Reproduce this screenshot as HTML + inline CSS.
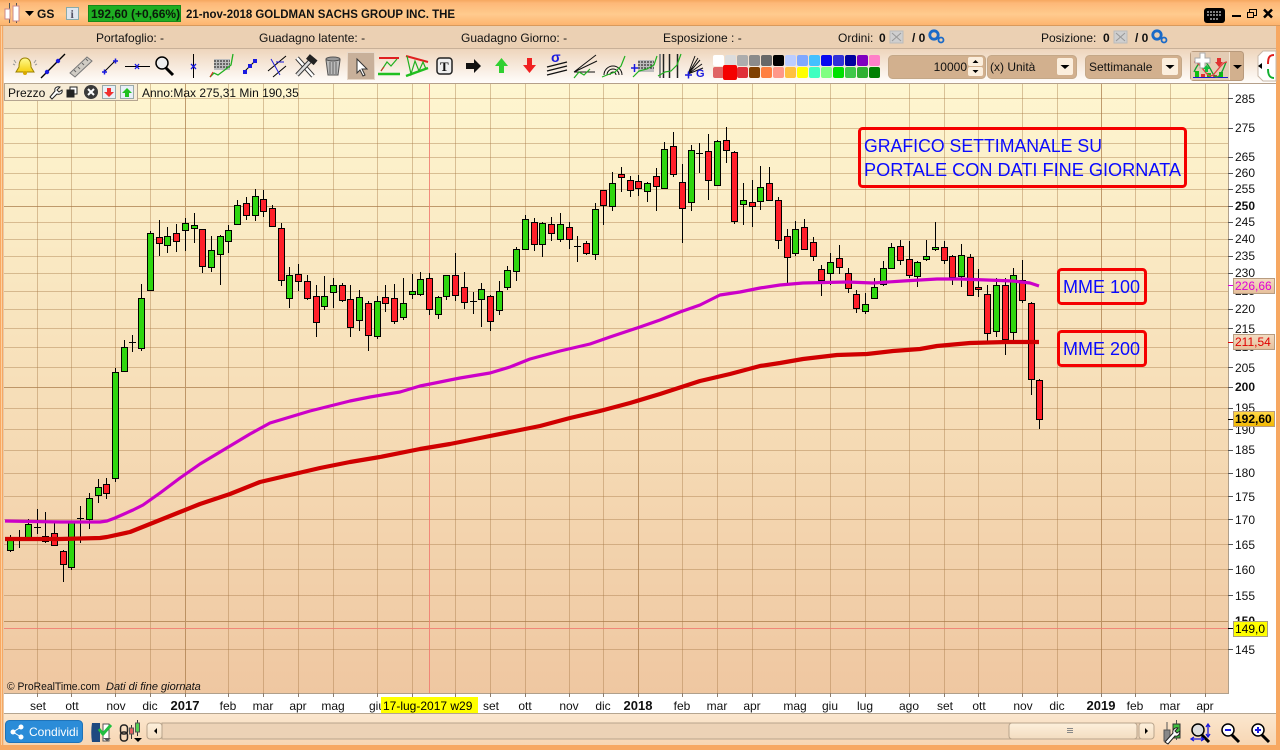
<!DOCTYPE html>
<html><head><meta charset="utf-8"><title>GS</title>
<style>
html,body{margin:0;padding:0;background:#fff;width:1280px;height:750px;overflow:hidden}
svg{display:block}
text{font-family:"Liberation Sans",Arial,sans-serif;font-size:12px;fill:#111}
.b{font-weight:bold}
.ax text{font-size:12px}
.ann{font-size:18px;fill:#0a0aff}
</style></head><body>
<svg width="1280" height="750" viewBox="0 0 1280 750" xmlns="http://www.w3.org/2000/svg">
<defs>
<linearGradient id="chart" x1="0" y1="0" x2="0" y2="1"><stop offset="0" stop-color="#fef6d0"/><stop offset="1" stop-color="#efc7a1"/></linearGradient>
<linearGradient id="title" x1="0" y1="0" x2="0" y2="1"><stop offset="0" stop-color="#f6a75f"/><stop offset=".12" stop-color="#fdb878"/><stop offset=".55" stop-color="#ffcb8e"/><stop offset="1" stop-color="#fdb26c"/></linearGradient>
<linearGradient id="tool" x1="0" y1="0" x2="0" y2="1"><stop offset="0" stop-color="#eed5bc"/><stop offset="1" stop-color="#fffdfb"/></linearGradient>
<linearGradient id="bot" x1="0" y1="0" x2="0" y2="1"><stop offset="0" stop-color="#fbe7cf"/><stop offset="1" stop-color="#f7d6b3"/></linearGradient>
<linearGradient id="btn" x1="0" y1="0" x2="0" y2="1"><stop offset="0" stop-color="#fdf0dc"/><stop offset="1" stop-color="#f3dcc0"/></linearGradient>
<linearGradient id="tag" x1="0" y1="0" x2="0" y2="1"><stop offset="0" stop-color="#f3dcc2"/><stop offset="1" stop-color="#e6bf9a"/></linearGradient>
<linearGradient id="gold" x1="0" y1="0" x2="0" y2="1"><stop offset="0" stop-color="#ffd84a"/><stop offset="1" stop-color="#f2b800"/></linearGradient>
<linearGradient id="bell" x1="0" y1="0" x2="0" y2="1"><stop offset="0" stop-color="#fffb90"/><stop offset="1" stop-color="#f5cf10"/></linearGradient>
</defs>

<!-- frame -->
<rect width="1280" height="750" fill="#fff"/>
<rect x="0" y="0" width="1280" height="26" fill="url(#title)"/>
<rect x="0" y="25" width="1280" height="1" fill="#d99a5c"/>
<rect x="0" y="26" width="1280" height="23" fill="#ebd0b3"/>
<rect x="0" y="48" width="1280" height="1" fill="#c8b098"/>
<rect x="0" y="49" width="1280" height="34" fill="url(#tool)"/>
<rect x="0" y="83" width="1280" height="1" fill="#b5a08a"/>

<!-- chart -->
<rect x="4" y="84" width="1224" height="609" fill="url(#chart)"/>
<g stroke="#a87a48" stroke-opacity=".42" fill="none">
<path d="M4 98.500H1228M4 113.500H1228M4 128.500H1228M4 143.500H1228M4 157.500H1228M4 173.500H1228M4 189.500H1228M4 222.500H1228M4 239.500H1228M4 256.500H1228M4 273.500H1228M4 291.500H1228M4 309.500H1228M4 328.500H1228M4 347.500H1228M4 367.500H1228M4 408.500H1228M4 429.500H1228M4 450.500H1228M4 473.500H1228M4 496.500H1228M4 519.500H1228M4 544.500H1228M4 569.500H1228M4 595.500H1228M4 649.500H1228"/>
<path d="M37.500 84V693M71.500 84V693M115.500 84V693M150.500 84V693M228.500 84V693M263.500 84V693M298.500 84V693M333.500 84V693M377.500 84V693M412.500 84V693M455.500 84V693M490.500 84V693M525.500 84V693M569.500 84V693M603.500 84V693M682.500 84V693M717.500 84V693M752.500 84V693M795.500 84V693M830.500 84V693M865.500 84V693M909.500 84V693M944.500 84V693M978.500 84V693M1022.500 84V693M1057.500 84V693M1135.500 84V693M1170.500 84V693M1205.500 84V693"/>
</g>
<g stroke="#a87a48" stroke-opacity=".72" fill="none">
<path d="M4 206.500H1228M4 387.500H1228M4 621.500H1228M185.500 84V693M638.500 84V693M1101.500 84V693"/>
</g>
<path d="M429.500 84V693M4 628.500H1228" stroke="#f07a70" fill="none" opacity=".85"/>

<!-- wicks -->
<path stroke="#000" stroke-width="1" fill="none" d="M10.500 535V552M19.500 530V548M28.500 519V539M37.500 509V534M45.500 512V543M54.500 523V546M63.500 550V582M71.500 521V570M80.500 506V543M89.500 493V529M98.500 479V503M106.500 478V499M115.500 368V482M124.500 340V371M132.500 335V352M141.500 284V351M150.500 231V290M159.500 220V256M167.500 227V253M176.500 224V252M185.500 218V251M194.500 213V243M202.500 229V273M211.500 236V272M220.500 235V285M228.500 225V253M237.500 200V224M246.500 197V220M255.500 189V221M263.500 190V217M272.500 205V226M281.500 223V286M289.500 267V308M298.500 264V291M307.500 275V300M316.500 285V337M324.500 276V310M333.500 278V308M342.500 283V302M350.500 285V337M359.500 290V331M368.500 301V351M377.500 296V339M385.500 285V312M394.500 284V324M403.500 278V320M412.500 274V299M420.500 272V296M429.500 273V315M438.500 296V319M446.500 275V300M455.500 253V301M464.500 272V309M473.500 292V314M481.500 283V327M490.500 295V331M499.500 281V315M507.500 266V290M516.500 247V281M525.500 215V249M534.500 218V251M542.500 222V257M551.500 217V241M560.500 213V242M569.500 222V249M577.500 236V262M586.500 241V255M595.500 203V260M603.500 190V225M612.500 172V211M621.500 167V192M630.500 176V197M638.500 175V196M647.500 182V202M656.500 168V211M664.500 142V189M673.500 132V177M682.500 164V243M691.500 145V211M699.500 143V173M708.500 134V200M717.500 140V186M726.500 127V163M734.500 151V224M743.500 183V225M752.500 180V227M760.500 166V210M769.500 167V201M778.500 197V249M787.500 229V283M795.500 221V256M804.500 219V250M813.500 237V261M821.500 265V296M830.500 253V285M839.500 245V274M848.500 268V293M856.500 290V313M865.500 293V314M874.500 278V299M883.500 261V286M891.500 243V268M900.500 240V265M909.500 241V278M917.500 261V287M926.500 240V261M935.500 222V251M944.500 241V264M952.500 255V285M961.500 244V287M970.500 254V296M978.500 269V297M987.500 285V342M996.500 278V337M1005.500 278V355M1013.500 268V341M1022.500 260V303M1031.500 302V395M1039.500 379V429"/>
<!-- dojis -->
<path stroke="#000" stroke-width="1" fill="none" d="M34 527.500h7M77 518.500h7M129 342.500h7M470 301.500h7M574 246.500h7M696 153.500h7"/>
<!-- green bodies -->
<path fill="#2fd60f" stroke="#000" stroke-width="1" d="M7.500 540.500h6v10h-6zM25.500 524.500h6v14h-6zM68.500 522.500h6v45h-6zM86.500 498.500h6v21h-6zM95.500 487.500h6v8h-6zM112.500 372.500h6v106h-6zM121.500 347.500h6v24h-6zM138.500 298.500h6v50h-6zM147.500 233.500h6v57h-6zM164.500 236.500h6v9h-6zM182.500 223.500h6v7h-6zM191.500 225.500h6v3h-6zM208.500 250.500h6v17h-6zM217.500 236.500h6v18h-6zM225.500 230.500h6v11h-6zM234.500 205.500h6v19h-6zM252.500 196.500h6v19h-6zM286.500 275.500h6v23h-6zM321.500 296.500h6v10h-6zM330.500 285.500h6v7h-6zM356.500 297.500h6v23h-6zM374.500 301.500h6v35h-6zM400.500 303.500h6v14h-6zM409.500 291.500h6v3h-6zM417.500 279.500h6v15h-6zM435.500 297.500h6v17h-6zM443.500 275.500h6v21h-6zM478.500 289.500h6v10h-6zM496.500 291.500h6v19h-6zM504.500 270.500h6v17h-6zM513.500 249.500h6v22h-6zM522.500 219.500h6v30h-6zM539.500 223.500h6v21h-6zM557.500 224.500h6v15h-6zM592.500 209.500h6v45h-6zM609.500 183.500h6v23h-6zM644.500 183.500h6v8h-6zM661.500 149.500h6v39h-6zM688.500 150.500h6v52h-6zM714.500 141.500h6v44h-6zM740.500 200.500h6v4h-6zM757.500 187.500h6v14h-6zM792.500 229.500h6v24h-6zM827.500 262.500h6v11h-6zM862.500 304.500h6v7h-6zM871.500 287.500h6v11h-6zM880.500 268.500h6v16h-6zM888.500 247.500h6v21h-6zM914.500 262.500h6v14h-6zM923.500 256.500h6v3h-6zM932.500 247.500h6v2h-6zM958.500 255.500h6v21h-6zM993.500 285.500h6v46h-6zM1010.500 275.500h6v57h-6z"/>
<!-- red bodies -->
<path fill="#ff1f2a" stroke="#000" stroke-width="1" d="M42.500 536.500h6v5h-6zM51.500 533.500h6v12h-6zM60.500 551.500h6v13h-6zM103.500 484.500h6v9h-6zM156.500 237.500h6v6h-6zM173.500 233.500h6v8h-6zM199.500 229.500h6v37h-6zM243.500 203.500h6v12h-6zM260.500 199.500h6v12h-6zM269.500 208.500h6v18h-6zM278.500 228.500h6v52h-6zM295.500 274.500h6v7h-6zM304.500 281.500h6v17h-6zM313.500 296.500h6v26h-6zM339.500 285.500h6v15h-6zM347.500 299.500h6v28h-6zM365.500 303.500h6v32h-6zM382.500 297.500h6v6h-6zM391.500 298.500h6v23h-6zM426.500 278.500h6v31h-6zM452.500 275.500h6v20h-6zM461.500 287.500h6v15h-6zM487.500 296.500h6v25h-6zM531.500 222.500h6v22h-6zM548.500 224.500h6v9h-6zM566.500 227.500h6v12h-6zM583.500 243.500h6v10h-6zM600.500 190.500h6v15h-6zM618.500 174.500h6v3h-6zM627.500 180.500h6v10h-6zM635.500 181.500h6v7h-6zM653.500 176.500h6v10h-6zM670.500 146.500h6v28h-6zM679.500 182.500h6v26h-6zM705.500 151.500h6v29h-6zM723.500 140.500h6v10h-6zM731.500 152.500h6v69h-6zM749.500 202.500h6v4h-6zM766.500 183.500h6v17h-6zM775.500 200.500h6v40h-6zM784.500 236.500h6v21h-6zM801.500 227.500h6v22h-6zM810.500 242.500h6v14h-6zM818.500 269.500h6v11h-6zM836.500 258.500h6v9h-6zM845.500 273.500h6v15h-6zM853.500 294.500h6v14h-6zM897.500 246.500h6v14h-6zM906.500 259.500h6v16h-6zM941.500 247.500h6v13h-6zM949.500 256.500h6v21h-6zM967.500 257.500h6v38h-6zM975.500 287.500h6v2h-6zM984.500 294.500h6v39h-6zM1002.500 285.500h6v54h-6zM1019.500 280.500h6v20h-6zM1028.500 303.500h6v76h-6zM1036.500 380.500h6v39h-6z"/>

<!-- moving averages -->
<path fill="none" stroke="#cc00c8" stroke-width="3.200" stroke-linejoin="round" stroke-linecap="butt" d="M5 521L60 522L100 522L107 521L115 518L133 510L143 505L160 493L180 478L200 464L230 446L250 434L270 423L290 417L310 411L330 406L350 401L370 397L400 392L420 386L440 382L460 378L490 373L510 367L530 359L560 351L590 344L610 337L640 327L660 320L680 312L700 305L720 295L740 292L760 288L780 285L803 283L847 282L873 283L903 281L937 279L960 279L987 280L1013 281L1030 283L1039 286"/>
<path fill="none" stroke="#d00000" stroke-width="4.200" stroke-linejoin="round" stroke-linecap="butt" d="M5 539L60 539L100 538L107 537L130 532L160 520L180 512L200 504L230 494L260 482L290 475L320 468L350 462L380 457L420 449L450 444L480 438L510 432L540 426L570 418L600 411L630 403L660 394L700 381L730 374L760 366L780 363L803 359L837 355L867 354L893 351L920 349L937 346L970 343L1007 342L1039 342"/>

<!-- frame borders for chart -->
<path d="M1228.500 84V693.500H4" stroke="#b0a08c" fill="none"/>
<rect x="0" y="26" width="4" height="724" fill="#f7a862"/>
<rect x="1" y="26" width="1" height="724" fill="#fcd0a0"/>
<rect x="3" y="26" width="1" height="724" fill="#e8c8a8"/>
<rect x="1276" y="26" width="4" height="724" fill="#f7a862"/>

<!-- annotations -->
<g fill="none" stroke="#f50000" stroke-width="3">
<rect x="859.500" y="128.500" width="326" height="58" rx="3"/>
<rect x="1058.500" y="269.500" width="87" height="34" rx="3"/>
<rect x="1058.500" y="331.500" width="87" height="34" rx="3"/>
</g>
<text class="ann" x="864" y="152" textLength="238" lengthAdjust="spacingAndGlyphs">GRAFICO SETTIMANALE SU</text>
<text class="ann" x="864" y="176" textLength="317" lengthAdjust="spacingAndGlyphs">PORTALE CON DATI FINE GIORNATA</text>
<text class="ann" x="1063" y="293">MME 100</text>
<text class="ann" x="1063" y="355">MME 200</text>

<!-- y axis -->
<path stroke="#555" fill="none" d="M1228 98.500h5M1228 128.500h5M1228 157.500h5M1228 173.500h5M1228 189.500h5M1228 206.500h5M1228 222.500h5M1228 239.500h5M1228 256.500h5M1228 273.500h5M1228 309.500h5M1228 328.500h5M1228 367.500h5M1228 387.500h5M1228 408.500h5M1228 429.500h5M1228 450.500h5M1228 473.500h5M1228 496.500h5M1228 519.500h5M1228 544.500h5M1228 569.500h5M1228 595.500h5M1228 649.500h5"/>
<g class="ax">
<text x="1235" y="103">285</text><text x="1235" y="132">275</text><text x="1235" y="161">265</text><text x="1235" y="177">260</text><text x="1235" y="193">255</text><text x="1235" y="210" class="b">250</text><text x="1235" y="226">245</text><text x="1235" y="243">240</text><text x="1235" y="260">235</text><text x="1235" y="277">230</text><text x="1235" y="295">225</text><text x="1235" y="313">220</text><text x="1235" y="333">215</text><text x="1235" y="351">210</text><text x="1235" y="372">205</text><text x="1235" y="391" class="b">200</text><text x="1235" y="412">195</text><text x="1235" y="434">190</text><text x="1235" y="454">185</text><text x="1235" y="477">180</text><text x="1235" y="501">175</text><text x="1235" y="524">170</text><text x="1235" y="549">165</text><text x="1235" y="574">160</text><text x="1235" y="600">155</text><text x="1235" y="625" class="b">150</text><text x="1235" y="654">145</text>
</g>
<!-- tags -->
<rect x="1233.500" y="278.500" width="41" height="15" fill="url(#tag)" stroke="#b89c80"/><text x="1235" y="290" style="fill:#e000d8">226,66</text>
<rect x="1233.500" y="334.500" width="41" height="15" fill="url(#tag)" stroke="#b89c80"/><text x="1235" y="346" style="fill:#e00000">211,54</text>
<rect x="1233.500" y="411.500" width="41" height="15" fill="url(#gold)" stroke="#b89c80"/><text x="1235" y="423" class="b" style="fill:#000">192,60</text>
<rect x="1233.500" y="621.500" width="34" height="15" fill="#ffff00" stroke="#a8a080"/><text x="1235" y="633" style="fill:#000">149,0</text>
<path d="M1228 285.500h5" stroke="#e000d8"/><path d="M1228 342.500h5" stroke="#e00000"/><path d="M1228 419.500h5" stroke="#000"/><path d="M1228 628.500h5" stroke="#000"/>

<!-- x axis -->
<path stroke="#8c7c6c" fill="none" d="M37.500 693v4M71.500 693v4M115.500 693v4M150.500 693v4M185.500 693v4M228.500 693v4M263.500 693v4M298.500 693v4M333.500 693v4M377.500 693v4M412.500 693v4M455.500 693v4M490.500 693v4M525.500 693v4M569.500 693v4M603.500 693v4M638.500 693v4M682.500 693v4M717.500 693v4M752.500 693v4M795.500 693v4M830.500 693v4M865.500 693v4M909.500 693v4M944.500 693v4M978.500 693v4M1022.500 693v4M1057.500 693v4M1101.500 693v4M1135.500 693v4M1170.500 693v4M1205.500 693v4"/>
<g class="ax" text-anchor="middle">
<text x="38" y="710">set</text><text x="72" y="710">ott</text><text x="116" y="710">nov</text><text x="150" y="710">dic</text><text x="185" y="710" class="b" style="font-size:13px">2017</text><text x="228" y="710">feb</text><text x="263" y="710">mar</text><text x="298" y="710">apr</text><text x="333" y="710">mag</text><text x="377" y="710">giu</text><text x="491" y="710">set</text><text x="525" y="710">ott</text><text x="569" y="710">nov</text><text x="603" y="710">dic</text><text x="638" y="710" class="b" style="font-size:13px">2018</text><text x="682" y="710">feb</text><text x="717" y="710">mar</text><text x="752" y="710">apr</text><text x="795" y="710">mag</text><text x="830" y="710">giu</text><text x="865" y="710">lug</text><text x="909" y="710">ago</text><text x="945" y="710">set</text><text x="979" y="710">ott</text><text x="1023" y="710">nov</text><text x="1057" y="710">dic</text><text x="1101" y="710" class="b" style="font-size:13px">2019</text><text x="1135" y="710">feb</text><text x="1170" y="710">mar</text><text x="1205" y="710">apr</text>
</g>
<rect x="381" y="697" width="97" height="16" fill="#ffff00"/>
<text x="383" y="710" style="fill:#000">17-lug-2017 w29</text>

<!-- copyright -->
<text x="7" y="690" style="font-size:11px" textLength="93" lengthAdjust="spacingAndGlyphs">© ProRealTime.com</text>
<text x="106" y="690" style="font-size:11px;font-style:italic">Dati di fine giornata</text>

<!-- legend -->
<rect x="4.500" y="83.500" width="133" height="17" fill="#f7ecd6" stroke="#b5a590"/>
<text x="8" y="97">Prezzo</text>
<path d="M50 97l5-6c-1-3 2-5 5-4l-3 3 2 2 3-2c1 3-2 5-5 4l-5 5z" fill="#fff" stroke="#222"/>
<rect x="70" y="87" width="7" height="7" fill="#fff" stroke="#222"/><rect x="67" y="90" width="7" height="7" fill="#222" stroke="#222"/>
<circle cx="91" cy="92" r="7" fill="#3a3a3a"/><path d="M88 89l6 6M94 89l-6 6" stroke="#fff" stroke-width="2"/>
<rect x="102.500" y="85.500" width="13" height="13" fill="#e8f0f8" stroke="#9aa"/><path d="M107 88h4v4h3l-5 5-5-5h3z" fill="#f03030"/>
<rect x="120.500" y="85.500" width="13" height="13" fill="#e8f0f8" stroke="#9aa"/><path d="M125 97h4v-4h3l-5-5-5 5h3z" fill="#20c020"/>
<text x="142" y="97">Anno:Max 275,31 Min 190,35</text>

<!-- title bar -->
<g>
<path d="M9.500 3v20" stroke="#555"/><rect x="5" y="9" width="5" height="10" fill="#fff" stroke="#c88"/>
<path d="M16.500 3v20" stroke="#555"/><rect x="13" y="6" width="6" height="15" fill="#fff" stroke="#c88"/>
<path d="M25 11h9l-4.500 5z" fill="#000"/>
<text x="37" y="18" class="b">GS</text>
<rect x="66.500" y="7.500" width="12" height="12" fill="#dfe6ee" stroke="#8aa"/><text x="70.500" y="18" class="b" style="fill:#556;font-family:'Liberation Serif',serif">i</text>
<rect x="88.500" y="5.500" width="92" height="16" fill="#1fae22" stroke="#178a1a"/>
<text x="91" y="18" class="b" style="fill:#0a1a0a">192,60 (+0,66%)</text>
<text x="186" y="18" class="b" textLength="269" lengthAdjust="spacingAndGlyphs">21-nov-2018 GOLDMAN SACHS GROUP INC. THE</text>
<rect x="1204" y="8" width="21" height="15" rx="3" fill="#000"/><path d="M1207 12h15M1207 15h15M1210 19h9" stroke="#fff" stroke-dasharray="2 1"/>
<rect x="1232" y="15" width="9" height="2" fill="#000"/>
<rect x="1249.500" y="9.500" width="7" height="6" fill="none" stroke="#000"/><rect x="1247.500" y="12.500" width="6" height="5" fill="#ffc080" stroke="#000"/>
<path d="M1264 9.500l8 8M1272 9.500l-8 8" stroke="#000" stroke-width="2.500"/>
</g>

<!-- info row -->
<text x="96" y="42">Portafoglio:  -</text>
<text x="259" y="42">Guadagno latente:  -</text>
<text x="461" y="42">Guadagno Giorno:  -</text>
<text x="663" y="42">Esposizione :  -</text>
<text x="838" y="42">Ordini:</text><text x="879" y="42" class="b">0</text>
<rect x="890" y="31" width="13" height="12" fill="#cfcfcf" stroke="#bbb"/><path d="M892 33l9 8M901 33l-9 8" stroke="#999"/>
<text x="912" y="42" class="b">/ 0</text>
<circle cx="934" cy="35" r="4.200" fill="none" stroke="#1a6ac8" stroke-width="2.800"/><circle cx="941" cy="40" r="2.500" fill="none" stroke="#1a6ac8" stroke-width="1.800"/>
<text x="1041" y="42">Posizione:</text><text x="1103" y="42" class="b">0</text>
<rect x="1114" y="31" width="13" height="12" fill="#cfcfcf" stroke="#bbb"/><path d="M1116 33l9 8M1125 33l-9 8" stroke="#999"/>
<text x="1135" y="42" class="b">/ 0</text>
<circle cx="1157" cy="35" r="4.200" fill="none" stroke="#1a6ac8" stroke-width="2.800"/><circle cx="1164" cy="40" r="2.500" fill="none" stroke="#1a6ac8" stroke-width="1.800"/>

<!-- toolbar icons -->
<path d="M25 58c-5 0-6 5-6 9l-3 5h18l-3-5c0-4-1-9-6-9z" fill="url(#bell)" stroke="#9a8000"/>
<circle cx="25" cy="73" r="2" fill="#d8a800"/>
<path d="M14 60l2 3M36 60l-2 3M13 64l2 1M37 64l-2 1" stroke="#999"/>
<path d="M41 78L65 54" stroke="#000" stroke-width="1.300"/><circle cx="47" cy="72" r="2.200" fill="#1a1ae0"/><circle cx="58" cy="61" r="2.200" fill="#1a1ae0"/>
<path d="M70 73L87 57l5 4-17 16z" fill="#d0ccc4" stroke="#777"/><path d="M76 72l-2-2M80 69l-2-2M84 65l-2-2M88 61l-2-2" stroke="#666"/>
<path d="M104 72l11-11" stroke="#000"/><path d="M102 72h5M104.500 69.500v5M113 61h5M115.500 58.500v5" stroke="#1a1ae0" stroke-width="1.500"/>
<path d="M125 66.500h25" stroke="#000"/><path d="M135 64l4 5M139 64l-4 5" stroke="#1a1ae0" stroke-width="1.300"/>
<circle cx="162" cy="63" r="6" fill="#eee" stroke="#000" stroke-width="1.500"/><path d="M166 68l7 7" stroke="#000" stroke-width="3"/>
<path d="M193.500 54v24" stroke="#000"/><path d="M191 64l5 5M196 64l-5 5" stroke="#1a1ae0" stroke-width="1.300"/>
<rect x="214" y="59" width="16" height="11" fill="#bdbdbd"/><path d="M214 61h16M214 64h16M214 67h16" stroke="#111" stroke-dasharray="2 1"/>
<path d="M210 77l4-4 4 2 8-6 5-4 2-11" stroke="#20b020" fill="none" stroke-width="1.300"/><path d="M210 77l3-5" stroke="#e02020"/>
<path d="M244 72l11-11" stroke="#000"/><rect x="243" y="70" width="4" height="4" fill="#1a1ae0"/><rect x="248" y="64" width="4" height="4" fill="#1a1ae0"/><rect x="253" y="59" width="4" height="4" fill="#1a1ae0"/>
<path d="M268 71l18-15M273 77l13-11" stroke="#000"/><path d="M271 59l9 16" stroke="#1a1ae0"/><path d="M276 62l8 0" stroke="#1a1ae0"/>
<path d="M297 58l16 18" stroke="#333" stroke-width="4.500"/><path d="M297 58l16 18" stroke="#fff" stroke-width="2.500"/><path d="M312 59l-15 16" stroke="#333" stroke-width="4.500"/><path d="M312 59l-15 16" stroke="#ddd" stroke-width="2.500"/><rect x="307" y="56" width="10" height="6" fill="#222" transform="rotate(40 311 59)"/>
<path d="M326 60h14l-2 15h-10z" fill="#bbb" stroke="#555"/><ellipse cx="333" cy="59" rx="7" ry="2" fill="#999" stroke="#555"/><path d="M330 62v12M333 62v12M336 62v12" stroke="#666"/>
<rect x="347.500" y="52.500" width="27" height="27" fill="#c8b09a" stroke="#e8d8c8"/>
<path d="M357 59v14l3-3 3 6 2-1-3-6h5z" fill="#fff" stroke="#333"/>
<path d="M378 74h22" stroke="#20c020" stroke-width="2.500"/><path d="M379 58h20" stroke="#e02020" stroke-width="2"/>
<path d="M381 71l6-9 4 4 6-7" stroke="#20b020" fill="none" stroke-width="1.200"/><path d="M381 71l3-4" stroke="#e02020"/>
<path d="M406 56l22 6" stroke="#e02020" stroke-width="2"/><path d="M406 76l22-8" stroke="#20c020" stroke-width="2.500"/><path d="M407 56l4 18 4-13 4 10 4-9 3 7" stroke="#20b020" fill="none" stroke-width="1.200"/>
<rect x="437" y="58" width="15" height="16" rx="3" fill="#eee" stroke="#222" stroke-width="1.500"/><text x="440" y="71" class="b" style="font-size:13px;font-family:'Liberation Serif',serif">T</text>
<path d="M466 63h8v-4l7 7-7 7v-4h-8z" fill="#111"/>
<path d="M499 73v-7h-4l6.500-8 6.500 8h-4v7z" fill="#30d030"/>
<path d="M527 58v7h-4l6.500 8 6.500-8h-4v-7z" fill="#f02020"/>
<path d="M547 67l20-5M547 71l20-5M547 75l20-5" stroke="#111" stroke-width="1.300"/><text x="551" y="62" class="b" style="fill:#1a1ae0;font-size:14px">σ</text>
<path d="M574 72l22-17M574 72l23-11M574 72h21" stroke="#111"/><path d="M574 78l5-6 5 3 6-6" stroke="#20b020" fill="none" stroke-width="1.200"/>
<path d="M604 75a9 9 0 0 1 18 0M607 75a6 6 0 0 1 12 0M610 75a3 3 0 0 1 6 0" fill="none" stroke="#111"/><path d="M602 77l5-2 8-3 6-6 4-10" stroke="#20b020" fill="none" stroke-width="1.200"/>
<rect x="638" y="60" width="16" height="12" fill="#bdbdbd"/><path d="M638 62h16M638 65h16M638 68h16" stroke="#111" stroke-dasharray="2 1"/><path d="M633 77l6-6 8-2 7-4 3-9" stroke="#20b020" fill="none" stroke-width="1.200"/><path d="M631 68h7M634.500 64v8" stroke="#1a1ae0" stroke-width="1.500"/>
<path d="M663.500 54v24M669.500 54v24M677.500 54v24" stroke="#222" stroke-width="1.500"/><path d="M660 54v24" stroke="#888" stroke-width="2"/><path d="M658 76l7-4 6-1 6-6 4-11" stroke="#20b020" fill="none" stroke-width="1.200"/>
<path d="M688 74l7-18M688 74l10-16M688 74l12-14M688 74l14-10M688 74l15-6" stroke="#111"/><path d="M685 75h7M688.500 71.500v7" stroke="#1a1ae0" stroke-width="1.500"/><text x="696" y="77" class="b" style="fill:#1a1ae0;font-size:11px">G</text>

<!-- palette -->
<g>
<rect x="713" y="55" width="11" height="11" rx="2" fill="#ffffff"/><rect x="725" y="55" width="11" height="11" rx="2" fill="#dcdcdc"/><rect x="737" y="55" width="11" height="11" rx="2" fill="#adadad"/><rect x="749" y="55" width="11" height="11" rx="2" fill="#8b8b8b"/><rect x="761" y="55" width="11" height="11" rx="2" fill="#686868"/><rect x="773" y="55" width="11" height="11" rx="2" fill="#000000"/><rect x="785" y="55" width="11" height="11" rx="2" fill="#bccdff"/><rect x="797" y="55" width="11" height="11" rx="2" fill="#80a8ff"/><rect x="809" y="55" width="11" height="11" rx="2" fill="#44c0ff"/><rect x="821" y="55" width="11" height="11" rx="2" fill="#0808f0"/><rect x="833" y="55" width="11" height="11" rx="2" fill="#3030d8"/><rect x="845" y="55" width="11" height="11" rx="2" fill="#0000a0"/><rect x="857" y="55" width="11" height="11" rx="2" fill="#8000c0"/><rect x="869" y="55" width="11" height="11" rx="2" fill="#ff80c8"/>
<rect x="713" y="67" width="11" height="11" rx="2" fill="#e06464"/><rect x="737" y="67" width="11" height="11" rx="2" fill="#e03038"/><rect x="749" y="67" width="11" height="11" rx="2" fill="#804000"/><rect x="761" y="67" width="11" height="11" rx="2" fill="#ff8040"/><rect x="773" y="67" width="11" height="11" rx="2" fill="#ff9888"/><rect x="785" y="67" width="11" height="11" rx="2" fill="#ffc040"/><rect x="797" y="67" width="11" height="11" rx="2" fill="#ffff00"/><rect x="809" y="67" width="11" height="11" rx="2" fill="#40ffc0"/><rect x="821" y="67" width="11" height="11" rx="2" fill="#80ff80"/><rect x="833" y="67" width="11" height="11" rx="2" fill="#00e000"/><rect x="845" y="67" width="11" height="11" rx="2" fill="#40c848"/><rect x="857" y="67" width="11" height="11" rx="2" fill="#30b030"/><rect x="869" y="67" width="11" height="11" rx="2" fill="#008000"/>
<rect x="723" y="65" width="14" height="15" rx="2" fill="#f50000"/>
</g>

<!-- inputs -->
<rect x="888.500" y="55.500" width="97" height="23" rx="4" fill="#d2b08e" stroke="#c4a888"/>
<text x="967" y="71" text-anchor="end">10000</text>
<rect x="968" y="57" width="15" height="9" rx="2" fill="#fbeedd"/><rect x="968" y="67" width="15" height="9" rx="2" fill="#fbeedd"/>
<path d="M972.500 63l3-3 3 3zM972.500 70l3 3 3-3z" fill="#000"/>
<rect x="987.500" y="55.500" width="89" height="23" rx="4" fill="#d2b08e" stroke="#c4a888"/>
<text x="990" y="71">(x) Unità</text>
<rect x="1057" y="58" width="16" height="17" rx="2" fill="#fbeedd"/><path d="M1060.500 65h9l-4.500 4z" fill="#000"/>
<rect x="1085.500" y="55.500" width="96" height="23" rx="4" fill="#d2b08e" stroke="#c4a888"/>
<text x="1089" y="71">Settimanale</text>
<rect x="1162" y="58" width="16" height="17" rx="2" fill="#fbeedd"/><path d="M1165.500 65h9l-4.500 4z" fill="#000"/>
<rect x="1190.500" y="51.500" width="53" height="29" rx="3" fill="#d2b08e" stroke="#b89a7c"/>
<rect x="1191" y="52" width="38" height="28" fill="#e4ccb4"/>
<path d="M1229.500 52v28" stroke="#f5e6d5"/>
<path d="M1233 65h9l-4.500 4z" fill="#000"/>
<path d="M1193 77.500h35" stroke="#1a1ad0"/><rect x="1195" y="71" width="4" height="6" fill="#10c010"/><rect x="1201" y="74" width="4" height="3" fill="#e03030"/><rect x="1207" y="73" width="4" height="4" fill="#10c010"/><rect x="1213" y="75" width="4" height="2" fill="#e03030"/><rect x="1219" y="72" width="4" height="5" fill="#10c010"/>
<path d="M1194 72c8-18 13-10 18 0s9 4 14-10" fill="none" stroke="#10a030" stroke-width="1.300"/><path d="M1194 62c8 0 13 20 20 12s9-12 13-12" fill="none" stroke="#e04040" stroke-width="1.300"/>
<path d="M1195 58h5v-5h5v5h5v5h-5v5h-5v-5h-5z" fill="#fff" stroke="#aaa"/>
<path d="M1217 58h4v4h2l-4 5-4-5h2z" fill="#e03030"/><path d="M1205 72h3v-3h2l-3.500-4-3.500 4h2z" fill="#10c040"/>
<path d="M1263 51h13v30h-13l-5-5v-20z" fill="#fff" stroke="#c8b8a8"/>
<path d="M1258 66l4-3v6z" fill="#000"/><path d="M1274 55c-5 0-6 3-6 9" fill="none" stroke="#e02020" stroke-width="2"/><path d="M1274 78c-5 0-6-4-6-9" fill="none" stroke="#10b030" stroke-width="2"/>

<!-- bottom bar -->
<rect x="4" y="714" width="1272" height="31" fill="url(#bot)"/>
<rect x="4" y="713" width="1272" height="1" fill="#b5a590"/>
<rect x="0" y="745" width="1280" height="5" fill="#f7a862"/>
<rect x="5.500" y="720.500" width="77" height="22" rx="4" fill="#2b8cd8" stroke="#1f73b8"/>
<circle cx="13" cy="732" r="2.500" fill="#fff"/><circle cx="21" cy="727" r="2.500" fill="#fff"/><circle cx="21" cy="737" r="2.500" fill="#fff"/><path d="M21 727l-8 5 8 5" stroke="#fff" fill="none"/>
<text x="29" y="736" style="fill:#fff">Condividi</text>
<path d="M92 723h8v19h-8c-1-6-1-13 0-19z" fill="#1f4a80"/><path d="M103 724h6v17h-6z" fill="#fff" stroke="#555"/>
<path d="M99 729l4 5 8-9" stroke="#20c040" stroke-width="3" fill="none"/><path d="M103 738h8l-4 3z" fill="#555"/>
<rect x="120.500" y="725" width="7" height="9" rx="3" fill="none" stroke="#222" stroke-width="1.500"/><rect x="120.500" y="732" width="7" height="9" rx="3" fill="none" stroke="#222" stroke-width="1.500"/>
<path d="M131.500 725v14" stroke="#333"/><rect x="129.500" y="728" width="4" height="6" fill="#e06060" stroke="#555"/>
<path d="M137.500 720v16" stroke="#333"/><rect x="135.500" y="723" width="4" height="9" fill="#50d050" stroke="#555"/>
<path d="M134 738h8l-4 4z" fill="#000"/>
<rect x="147" y="723" width="15" height="16" rx="3" fill="url(#btn)" stroke="#b8a48c"/><path d="M157 728v6l-3-3z" fill="#000"/>
<rect x="162" y="723" width="978" height="16" fill="#ecd2b6" stroke="#b8a48c"/>
<rect x="1009" y="723" width="128" height="16" rx="3" fill="url(#btn)" stroke="#b8a48c"/><path d="M1070 728.500h6M1070 730.500h6M1070 732.500h6" stroke="#888" transform="translate(-3 0)"/>
<rect x="1139" y="723" width="15" height="16" rx="3" fill="url(#btn)" stroke="#b8a48c"/><path d="M1145 728v6l3-3z" fill="#000"/>
<path d="M1167 722v22M1176.500 720v20" stroke="#555"/><rect x="1164" y="730" width="6" height="11" fill="#888" stroke="#555"/><rect x="1173" y="724" width="7" height="14" fill="#40c040" stroke="#333"/>
<path d="M1165 742l8-9c-1-3 2-6 5-5l-3 3 2 2 3-2c0 3-2 6-5 5l-7 8z" fill="#fff" stroke="#222"/>
<circle cx="1198" cy="730" r="6" fill="#ddd" stroke="#000" stroke-width="1.500"/><path d="M1202 735l7 7" stroke="#000" stroke-width="3"/>
<path d="M1208 725v11M1206 727l2-3 2 3M1206 734l2 3 2-3" stroke="#1a1ae0" fill="none" stroke-width="1.300"/><path d="M1192 739h11M1194 737l-3 2 3 2M1201 737l3 2-3 2" stroke="#1a1ae0" fill="none" stroke-width="1.300"/>
<circle cx="1228" cy="730" r="6" fill="#fff" stroke="#000" stroke-width="1.500"/><path d="M1232 735l7 7" stroke="#000" stroke-width="3"/><path d="M1225 730h6" stroke="#1a1ae0" stroke-width="2"/>
<circle cx="1258" cy="730" r="6" fill="#fff" stroke="#000" stroke-width="1.500"/><path d="M1262 735l7 7" stroke="#000" stroke-width="3"/><path d="M1255 730h6M1258 727v6" stroke="#1a1ae0" stroke-width="2"/>
</svg>
</body></html>
